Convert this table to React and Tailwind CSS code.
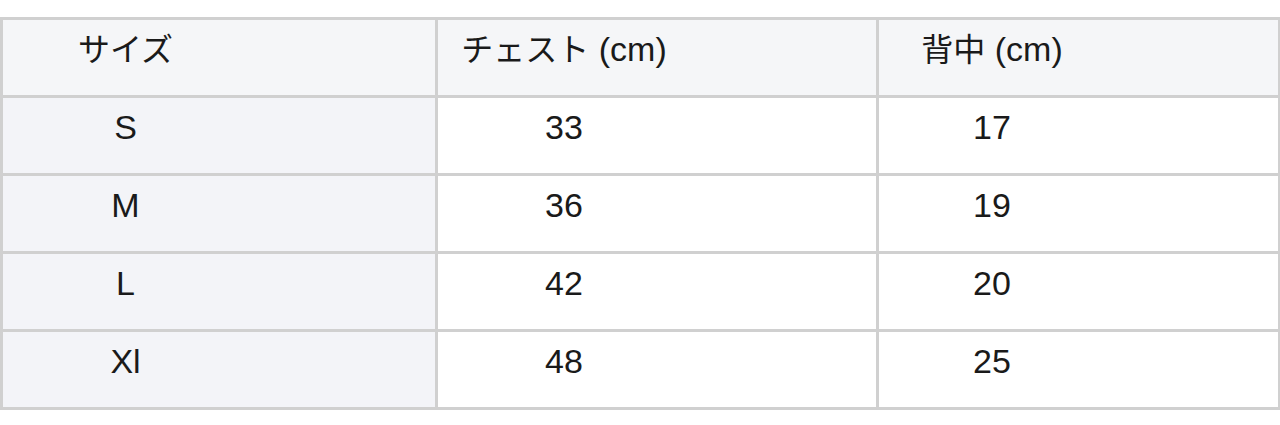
import React from 'react';

const rows = [
    { size: 'S', chest: '33', back: '17' },
    { size: 'M', chest: '36', back: '19' },
    { size: 'L', chest: '42', back: '20' },
    { size: 'Xl', chest: '48', back: '25' },
];

function App() {
    return (
        <div
            className="min-h-screen w-full bg-white pt-[17px] text-[#1a1a1a]"
            style={{ fontFamily: '"Liberation Sans", "Noto Sans CJK JP", sans-serif' }}
        >
            <table className="w-[1278px] table-fixed border-collapse text-[34px] leading-[38px]">
                <colgroup>
                    <col className="w-[435px]" />
                    <col className="w-[441px]" />
                    <col className="w-[402px]" />
                </colgroup>
                <thead>
                    <tr className="h-[78px] bg-[#f5f6f8]">
                        <th className="border-[3px] border-[#d0d0d0] pt-[10px] pr-[187px] text-center align-top font-normal">
                            <span className="text-[32px]">サイズ</span>
                        </th>
                        <th className="border-[3px] border-[#d0d0d0] pt-[10px] pr-[186px] text-center align-top font-normal">
                            <span className="text-[32px]">チェスト</span> (cm)
                        </th>
                        <th className="border-[3px] border-[#d0d0d0] pt-[10px] pr-[173px] text-center align-top font-normal">
                            <span className="text-[32px]">背中</span> (cm)
                        </th>
                    </tr>
                </thead>
                <tbody>
                    {rows.map((row) => (
                        <tr key={row.size} className="h-[78px]">
                            <td className="border-[3px] border-[#d0d0d0] bg-[#f3f4f8] pt-[10px] pr-[187px] text-center align-top">{row.size}</td>
                            <td className="border-[3px] border-[#d0d0d0] bg-white pt-[10px] pr-[186px] text-center align-top">{row.chest}</td>
                            <td className="border-[3px] border-[#d0d0d0] bg-white pt-[10px] pr-[173px] text-center align-top">{row.back}</td>
                        </tr>
                    ))}
                </tbody>
            </table>
        </div>
    );
}

export default App;
